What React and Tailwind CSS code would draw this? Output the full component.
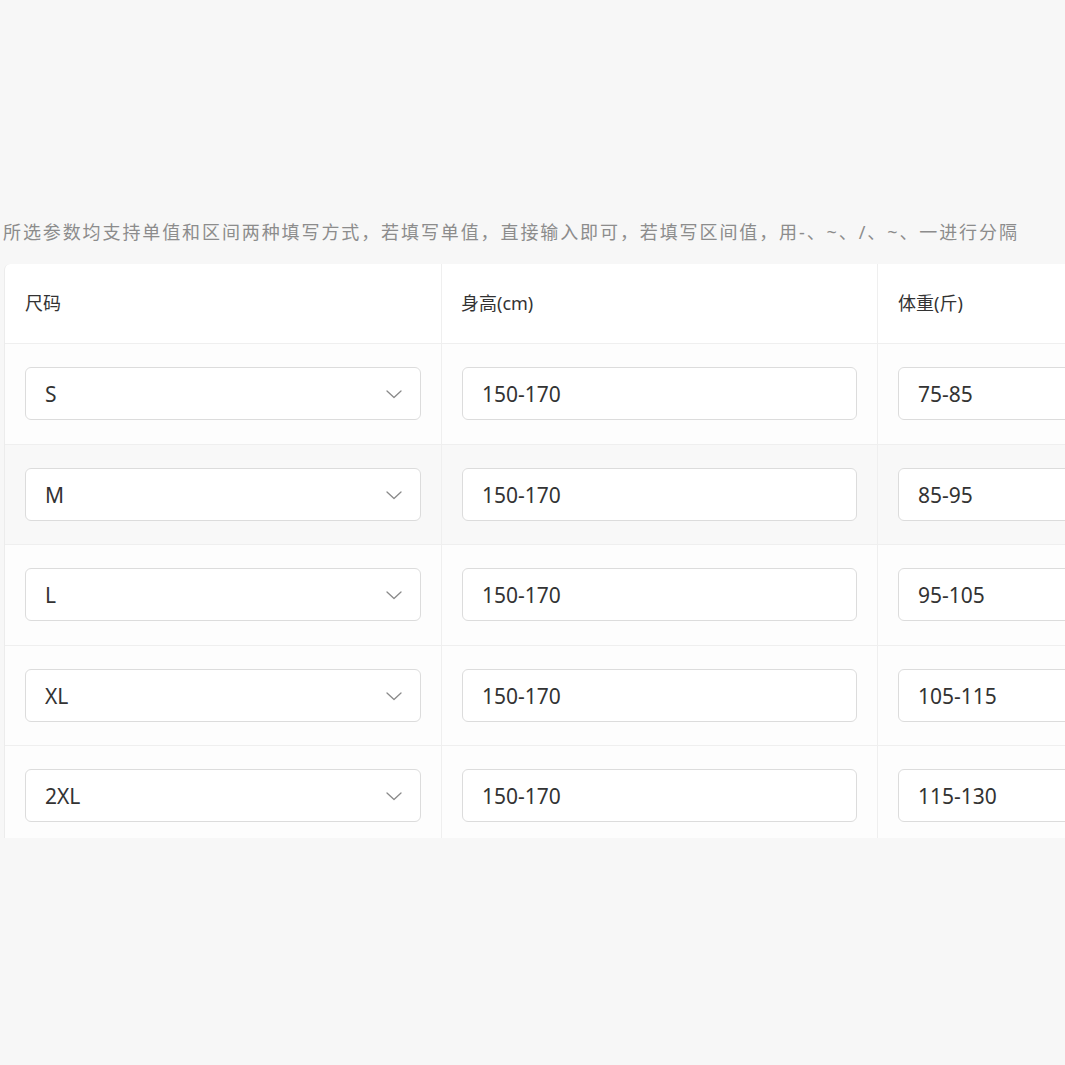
const rows = [
  { size: "S", h: "150-170", w: "75-85" },
  { size: "M", h: "150-170", w: "85-95", hover: true },
  { size: "L", h: "150-170", w: "95-105" },
  { size: "XL", h: "150-170", w: "105-115" },
  { size: "2XL", h: "150-170", w: "115-130" },
];

function Chevron() {
  return (
    <svg width="16" height="9" viewBox="0 0 16 9" fill="none" className="shrink-0">
      <path d="M1 1l7 6.5L15 1" stroke="#8a8a8a" strokeWidth="1.3" strokeLinecap="round" strokeLinejoin="round" />
    </svg>
  );
}

export default function App() {
  const font = { fontFamily: '"Noto Sans", "Noto Sans CJK SC", sans-serif' };
  return (
    <div className="min-h-screen w-full overflow-hidden bg-[#f7f7f7] pt-[218px]" style={font}>
      <p className="pl-[3px] text-[18px] leading-[28px] tracking-[1.9px] whitespace-nowrap text-[#8c8c8c]">
        所选参数均支持单值和区间两种填写方式，若填写单值，直接输入即可，若填写区间值，用-、~、/、~、一进行分隔
      </p>
      <div className="mt-[18px] ml-[4px] h-[574px] w-[1300px] overflow-hidden rounded-tl-[6px] border-l border-[#ececec] bg-white">
        <div className="grid grid-cols-[437px_436px_1fr] h-[80px] border-b border-[#efefef] text-[18px] text-[#333]">
          <div className="flex items-center pl-[20px] border-r border-[#efefef]">尺码</div>
          <div className="flex items-center pl-[19px] border-r border-[#efefef]">身高(cm)</div>
          <div className="flex items-center pl-[20px]">体重(斤)</div>
        </div>
        {rows.map((r) => (
          <div
            key={r.size}
            className={`grid grid-cols-[437px_436px_1fr] h-[100.5px] border-b border-[#efefef] ${r.hover ? "bg-[#f8f8f8]" : "bg-[#fdfdfd]"}`}
          >
            <div className="flex items-center px-[20px] border-r border-[#efefef]">
              <div className="flex h-[53px] w-full items-center justify-between rounded-[6px] border border-[#dcdcdc] bg-white pl-[19px] pr-[18px] pt-[2px] text-[21px] text-[#333]">
                <span>{r.size}</span>
                <Chevron />
              </div>
            </div>
            <div className="flex items-center px-[20px] border-r border-[#efefef]">
              <div className="flex h-[53px] w-full items-center rounded-[6px] border border-[#dcdcdc] bg-white pl-[19px] pt-[2px] text-[21px] text-[#333]">
                {r.h}
              </div>
            </div>
            <div className="flex items-center px-[20px]">
              <div className="flex h-[53px] w-full items-center rounded-[6px] border border-[#dcdcdc] bg-white pl-[19px] pt-[2px] text-[21px] text-[#333]">
                {r.w}
              </div>
            </div>
          </div>
        ))}
      </div>
    </div>
  );
}
